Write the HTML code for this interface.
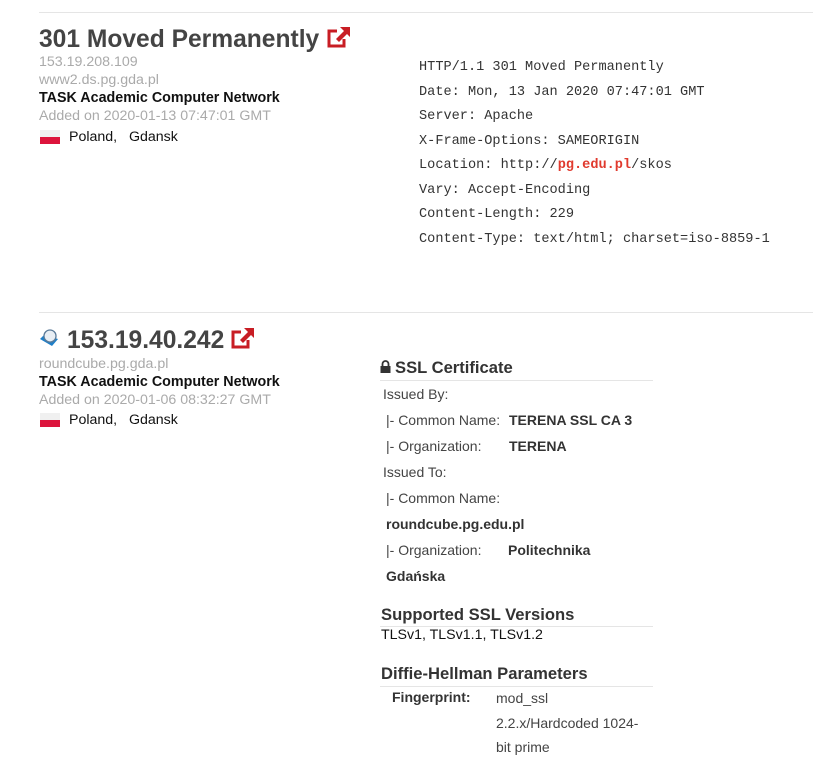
<!DOCTYPE html>
<html><head><meta charset="utf-8"><style>
body{margin:0;width:813px;height:778px;background:#fff;font-family:"Liberation Sans",sans-serif;position:relative;overflow:hidden;color:#333}
.a{position:absolute;white-space:nowrap}
.hr{position:absolute;height:1px;background:#e5e5e5}
.t{font-size:24.6px;font-weight:bold;color:#444}
.g{font-size:14.2px;color:#aaa}
.b{font-size:14.3px;font-weight:bold;color:#111}
.c{font-size:14.2px;color:#111}
.m{font-family:"Liberation Mono",monospace;font-size:13.6px;color:#333}
.h{font-size:16.6px;font-weight:bold;color:#333}
.s{font-size:14px;color:#444}
.sb{font-size:14px;font-weight:bold;color:#333}
.flag{position:absolute;width:20px;height:14px;background:linear-gradient(#f0f0f0 50%,#dc143c 50%)}
</style></head><body>
<div class="hr" style="left:39px;top:12px;width:774px"></div>
<div class="a t" style="left:39px;top:26px">301 Moved Permanently</div>
<svg class="a" style="left:326px;top:26px" width="26" height="23" viewBox="0 0 26 23"><path d="M11 5H3v15h15v-7" fill="none" stroke="#c81d24" stroke-width="3"/><path d="M14 1h10v10l-3-3-8 8-3-3 8-8z" fill="#c81d24"/></svg>
<div class="a g" style="left:39px;top:54px">153.19.208.109</div>
<div class="a g" style="left:39px;top:72px">www2.ds.pg.gda.pl</div>
<div class="a b" style="left:39px;top:90px">TASK Academic Computer Network</div>
<div class="a g" style="left:39px;top:108px">Added on 2020-01-13 07:47:01 GMT</div>
<div class="flag" style="left:40px;top:130px"></div>
<div class="a c" style="left:69px;top:129px">Poland,&nbsp;&nbsp; Gdansk</div>
<div class="a m" style="left:419px;top:56px;line-height:24.5px">HTTP/1.1 301 Moved Permanently<br>Date: Mon, 13 Jan 2020 07:47:01 GMT<br>Server: Apache<br>X-Frame-Options: SAMEORIGIN<br>Location: http://<b style="color:#e03a2e">pg.edu.pl</b>/skos<br>Vary: Accept-Encoding<br>Content-Length: 229<br>Content-Type: text/html; charset=iso-8859-1</div>

<div class="hr" style="left:39px;top:312px;width:774px"></div>
<svg class="a" style="left:39px;top:328px" width="22" height="20" viewBox="0 0 22 20"><path d="M1 11l4-4 14 4-6 7z" fill="#1e7fc8"/><circle cx="11" cy="8" r="6" fill="#e8eef4" stroke="#5a7a98" stroke-width="1.3"/></svg>
<div class="a t" style="left:67px;top:327px">153.19.40.242</div>
<svg class="a" style="left:230px;top:327px" width="26" height="23" viewBox="0 0 26 23"><path d="M11 5H3v15h15v-7" fill="none" stroke="#c81d24" stroke-width="3"/><path d="M14 1h10v10l-3-3-8 8-3-3 8-8z" fill="#c81d24"/></svg>
<div class="a g" style="left:39px;top:356px">roundcube.pg.gda.pl</div>
<div class="a b" style="left:39px;top:374px">TASK Academic Computer Network</div>
<div class="a g" style="left:39px;top:392px">Added on 2020-01-06 08:32:27 GMT</div>
<div class="flag" style="left:40px;top:413px"></div>
<div class="a c" style="left:69px;top:412px">Poland,&nbsp;&nbsp; Gdansk</div>

<svg class="a" style="left:380px;top:360px" width="11" height="13" viewBox="0 0 11 13"><path d="M2.5 6V4a3 3 0 016 0v2" fill="none" stroke="#333" stroke-width="1.8"/><rect x="0.5" y="6" width="10" height="7" fill="#333"/></svg>
<div class="a h" style="left:395px;top:358px">SSL Certificate</div>
<div class="hr" style="left:380px;top:380px;width:273px"></div>
<div class="a s" style="left:383px;top:386px">Issued By:</div>
<div class="a s" style="left:386px;top:412px">|- Common Name:</div><div class="a sb" style="left:509px;top:412px">TERENA SSL CA 3</div>
<div class="a s" style="left:386px;top:438px">|- Organization:</div><div class="a sb" style="left:509px;top:438px">TERENA</div>
<div class="a s" style="left:383px;top:464px">Issued To:</div>
<div class="a s" style="left:386px;top:490px">|- Common Name:</div>
<div class="a sb" style="left:386px;top:516px">roundcube.pg.edu.pl</div>
<div class="a s" style="left:386px;top:542px">|- Organization:</div><div class="a sb" style="left:508px;top:542px">Politechnika</div>
<div class="a sb" style="left:386px;top:568px">Gdańska</div>

<div class="a h" style="left:381px;top:605px">Supported SSL Versions</div>
<div class="hr" style="left:380px;top:626px;width:273px"></div>
<div class="a c" style="left:381px;top:627px">TLSv1, TLSv1.1, TLSv1.2</div>
<div class="a h" style="left:381px;top:664px">Diffie-Hellman Parameters</div>
<div class="hr" style="left:380px;top:686px;width:273px"></div>
<div class="a sb" style="left:392px;top:689px">Fingerprint:</div>
<div class="a s" style="left:496px;top:686px;line-height:24.5px">mod_ssl<br>2.2.x/Hardcoded 1024-<br>bit prime</div>
</body></html>
